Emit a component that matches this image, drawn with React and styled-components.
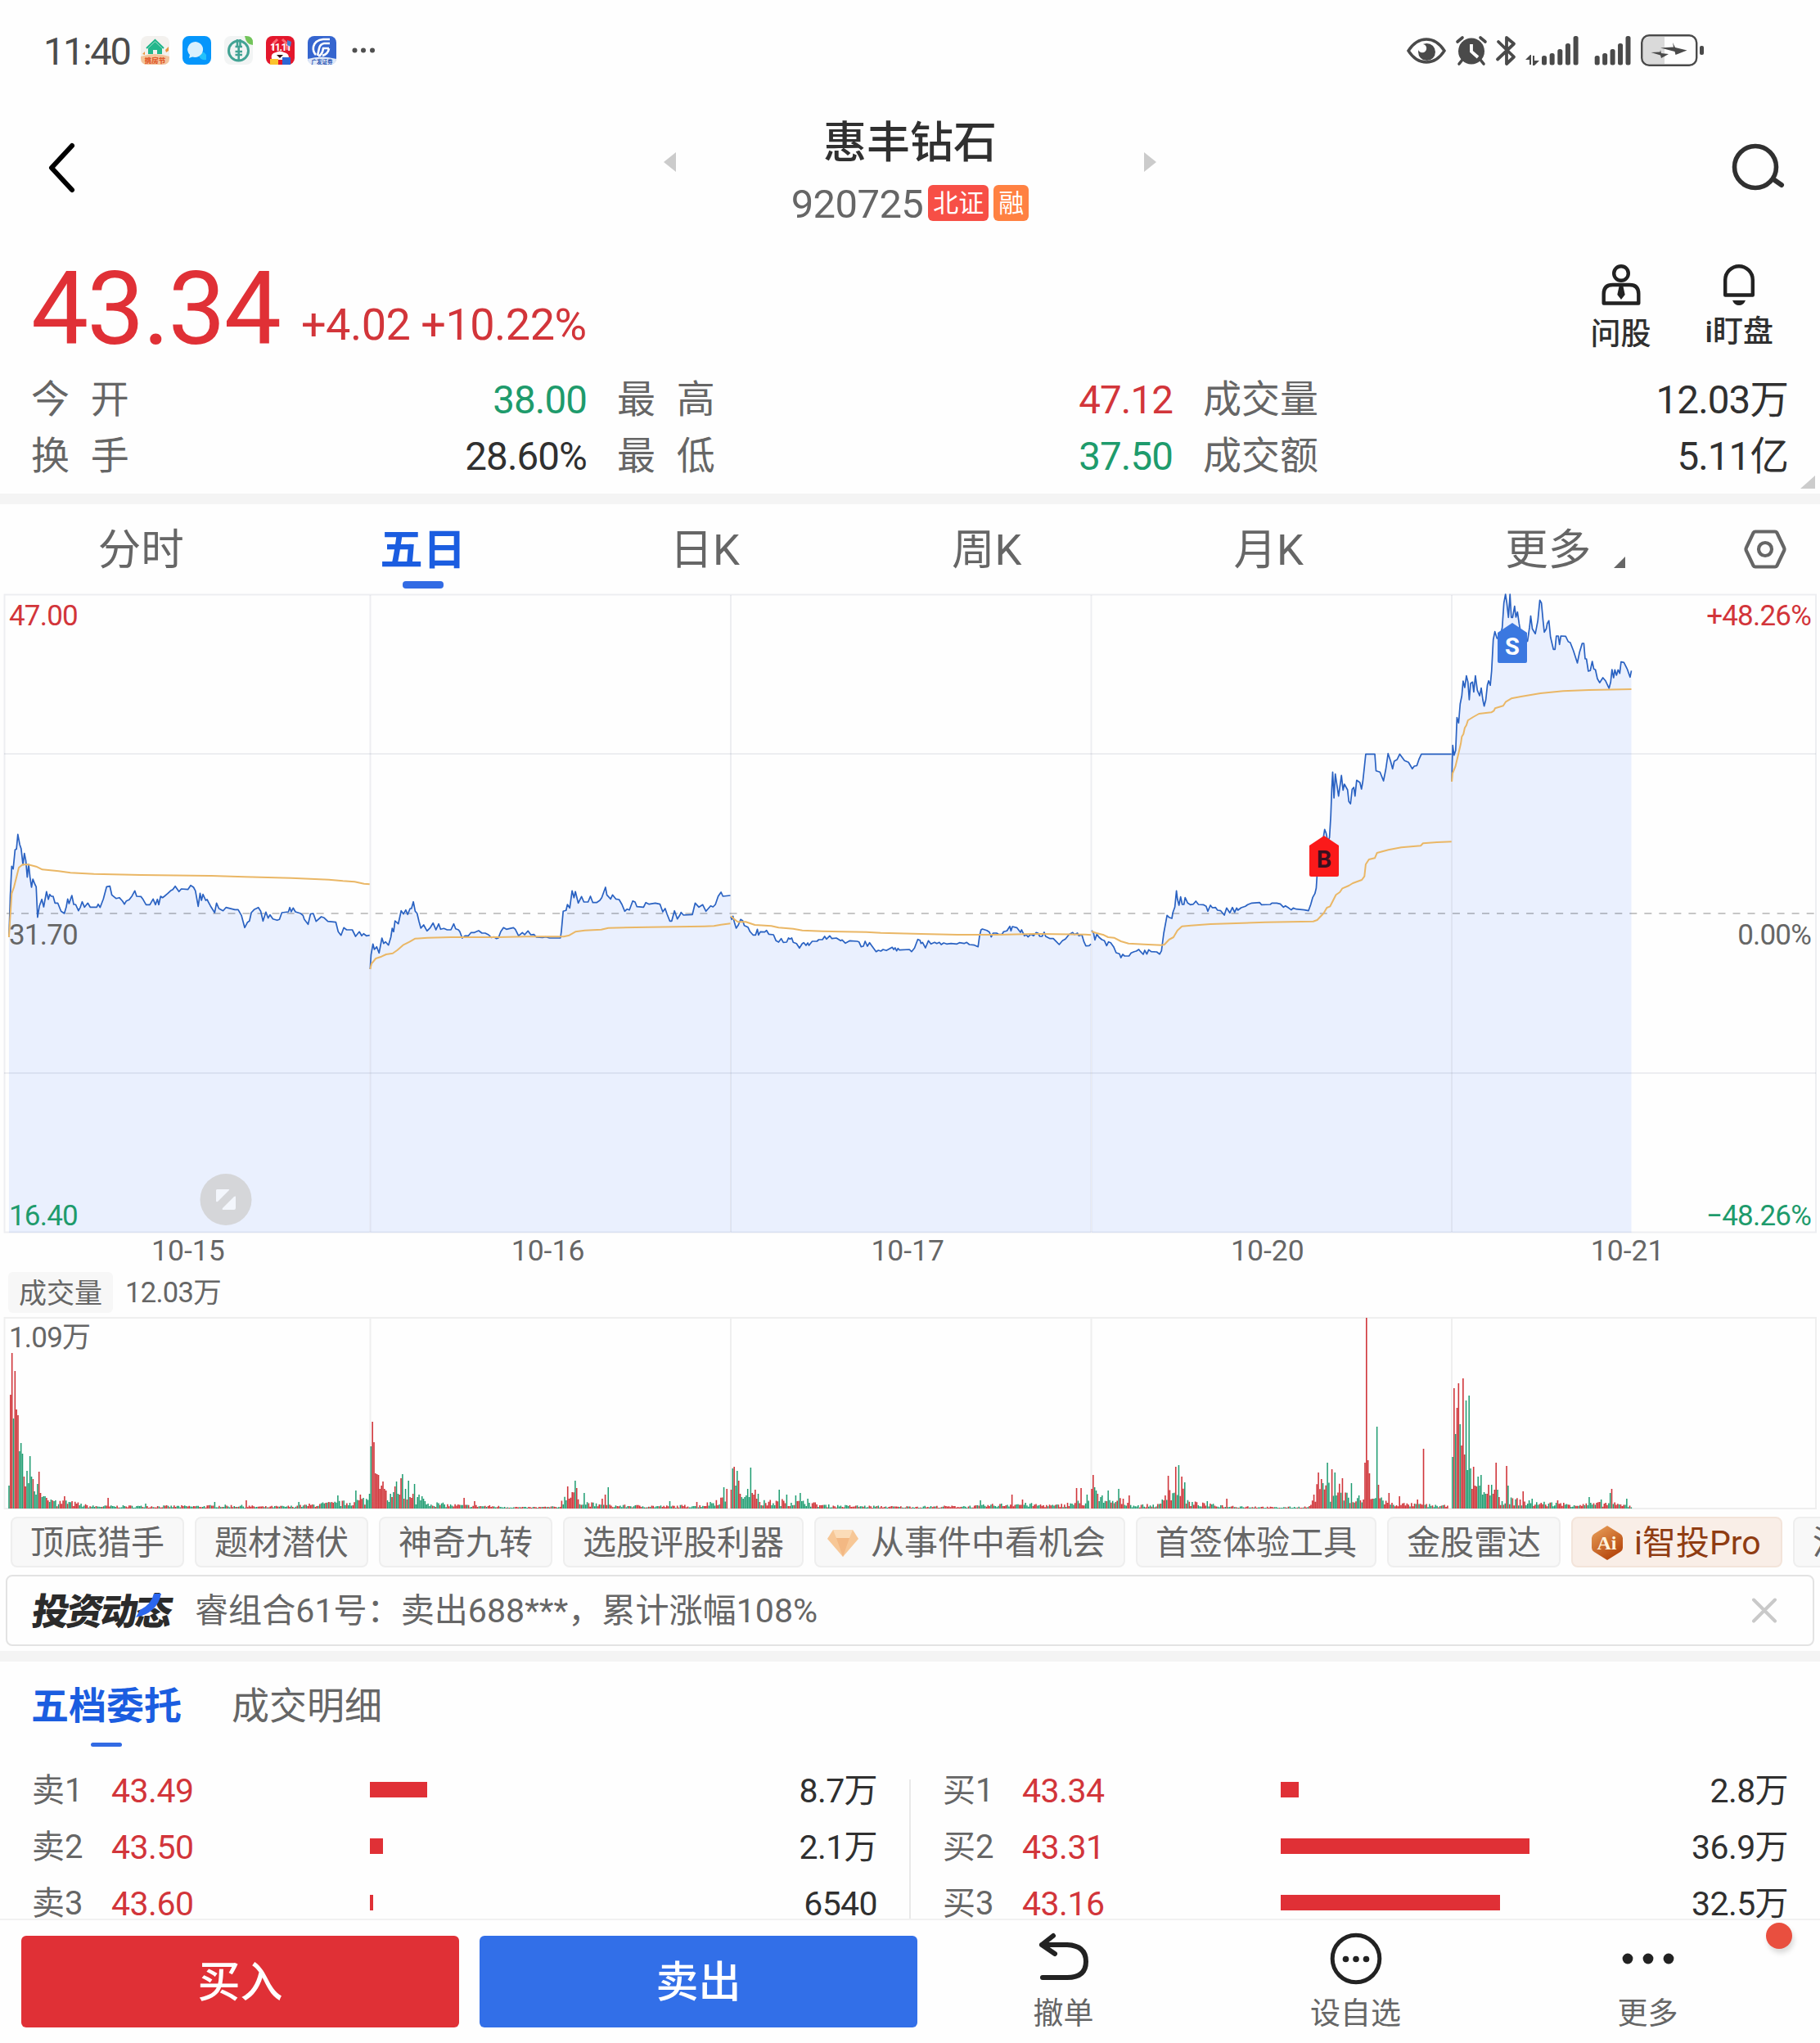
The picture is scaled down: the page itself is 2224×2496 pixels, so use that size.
import React from "react";
import styled, { createGlobalStyle } from "styled-components";

const RED = "#e03036";
const TEXT_RED = "#d2353a";
const GREEN = "#1e9b6c";
const BLUE = "#1b5de0";
const GREY = "#666666";
const DARK = "#303030";

/* ---------- data ---------- */

const stats = [
	{ label: "今 开", value: "38.00", color: GREEN },
	{ label: "最 高", value: "47.12", color: TEXT_RED },
	{ label: "成交量", value: "12.03万", color: DARK },
	{ label: "换 手", value: "28.60%", color: DARK },
	{ label: "最 低", value: "37.50", color: GREEN },
	{ label: "成交额", value: "5.11亿", color: DARK },
];

const periods = ["分时", "五日", "日K", "周K", "月K"];
const dates = ["10-15", "10-16", "10-17", "10-20", "10-21"];

const asks = [
	{ name: "卖1", price: "43.49", bar: 70, amount: "8.7万" },
	{ name: "卖2", price: "43.50", bar: 16, amount: "2.1万" },
	{ name: "卖3", price: "43.60", bar: 4, amount: "6540" },
];

const bids = [
	{ name: "买1", price: "43.34", bar: 22, amount: "2.8万" },
	{ name: "买2", price: "43.31", bar: 304, amount: "36.9万" },
	{ name: "买3", price: "43.16", bar: 268, amount: "32.5万" },
];

// scales of the recorded series: [x factor, x offset, y offset]
const A = [1.7422, 0, 980];
const B = [2.24, 880, 980];
const C = [2.529, 1400, 700];

const priceDays = [
	[[A, "19,495 22,340 25,235 28,245 32,175 35,172 38,118 42,155 45,170 49,230 52,188 55,215 58,275 61,228 64,275 67,312 70,282 74,300 77,310 80,422 84,380 89,356 93,384 99,328 103,356 106,338 109,345 113,345 117,370 123,370 130,400 137,408 141,385 144,355 147,372 153,342 157,375 161,375 167,398 171,385 175,365 180,385 187,370 192,385 206,385 209,374 213,386 220,355 227,310 234,308 238,340 247,353 254,350 261,363 265,374 269,362 275,358 281,344 287,325 291,345 300,346 305,358 311,376 319,376 326,355 331,376 335,356 338,376 342,345 346,350 350,345 357,335 363,325 368,320 373,308 381,328 386,318 400,320 406,305 412,312 416,325 422,382 426,334 429,360 432,338 438,360 441,357 448,380 457,405 461,370 466,390 475,398 481,386 500,394 507,394 514,415 521,460 527,440 531,436 535,405 541,394 550,386 555,400 560,436 566,403 571,425 575,413 581,428 590,433 595,430 600,405 614,402 617,386 620,402 624,388 629,402 640,408 645,415 648,430 656,448 661,410 667,408 673,437 684,420 690,424 698,437 715,440 720,475 726,488 732,460 738,468 750,468 757,492 765,475 770,490 774,482 780,490 787,488"]],
	[[A, "788,612 790,560 794,520 797,540 802,530 807,553 813,498 817,518 821,512 827,524 832,495 835,462 838,475 841,435 848,446 854,398 859,410 864,395 868,412 873,390 876,390 880,365 884,400 888,408 892,437 896,462 902,450 909,472 916,460 922,443 928,468 934,446 938,466 945,463 952,468 960,468 966,446 970,464 976,468 979,475 984,498 990,490 997,490 1003,478 1010,478 1019,471 1026,480 1033,480 1040,486 1046,496 1052,494 1057,500 1061,498 1066,475 1072,460 1078,466 1093,460 1097,466 1104,490 1112,478 1117,486 1124,472 1130,486 1137,485 1142,495 1155,496 1162,494 1170,498 1193,498 1195,475 1199,400 1205,397 1208,375 1213,388 1218,325 1222,350 1225,328 1231,370 1238,346 1243,366 1252,366 1257,345 1262,368 1270,368 1277,360 1281,350 1289,312 1292,340 1300,355 1304,340 1311,355 1318,357 1324,375 1330,400 1335,392 1340,395 1347,362 1352,366 1356,383 1370,385 1375,368 1382,374 1395,370 1405,374 1411,402 1416,390 1420,410 1426,436 1430,436 1436,398 1442,428 1447,415 1450,404 1455,414 1474,412 1480,370 1488,385 1496,376 1503,400 1513,380 1518,384 1523,375 1529,345 1535,330 1539,345 1555,342"]],
	[[B, "29,420 32,430 35,418 39,440 44,462 50,450 56,430 62,435 66,452 76,458 82,475 90,487 97,487 102,466 105,487 110,475 122,476 127,470 133,484 146,486 153,508 160,513 167,500 173,514 182,513 187,498 191,502 196,498 200,514 209,518 217,535 225,518 229,515 235,525 240,516 243,525 252,510 265,510 270,504 280,504 286,492 291,502 300,490 306,500 318,498 330,508 334,505 343,517 355,508 375,510 380,512 386,530 392,528 397,510 403,528 409,515 417,530 427,548 433,543 440,546 446,540 455,544 471,532 475,540 479,534 483,545 487,536 491,542 518,540 524,548 532,535 541,503 547,506 550,518 554,514 562,534 570,508 577,520 587,514 593,518 600,514 605,522 612,516 620,520 632,518 648,520 655,515 668,518 675,514 682,522 696,524 706,530 710,490 714,468 718,465 730,470 737,476 742,494 747,480 757,480 763,485 772,484 776,475 785,472 793,455 796,472 800,456 812,460 819,472 822,477 825,468 833,490 838,486 843,494 850,484 858,490 865,478 870,480 875,492 881,492 887,477 891,492 903,500 912,500 918,508 928,522 937,508 945,502 955,485 965,478 970,485 978,480 982,490 990,486 996,512 1001,527 1010,526 1015,520"]],
	[
		[B, "1017,470 1022,480 1026,505 1031,484 1037,495 1045,504 1052,508 1058,526 1063,512 1069,515 1077,530 1084,552 1093,556 1097,570 1102,558 1107,564 1119,564 1125,553 1133,548 1139,546 1146,540 1151,548 1158,558 1162,543 1168,557 1173,541 1180,548 1195,549 1203,557 1208,545"],
		[C, "56,1320 66,1255 72,1262 81,1266 84,1245 90,1225 95,1165 98,1195 103,1218 108,1187 113,1215 118,1215 122,1190 130,1210 138,1216 147,1214 155,1203 163,1215 178,1216 187,1222 192,1240 200,1218 206,1227 216,1226 222,1236 232,1238 243,1254 250,1228 260,1246 268,1226 275,1244 281,1228 285,1236 295,1227 308,1222 315,1216 328,1210 352,1208 358,1216 385,1215 390,1210 405,1210 416,1213 426,1225 432,1220 442,1228 450,1235 456,1228 465,1232 490,1235 503,1238 510,1215 516,1190 523,1175 527,1155 530,1100 540,1040 553,940 558,955 563,985 568,970 572,890 575,790 578,730 582,825 586,737 596,818 605,742 610,796 614,774 624,795 628,838 633,846 638,793 643,786 647,818 652,760 662,768 667,792 671,765 676,710 680,664 708,664 712,725 724,730 735,762 742,720 749,662 757,690 763,718 768,690 777,684 785,664 790,672 800,688 812,694 824,718 830,708 838,706 845,682 852,664 945,664"],
	],
	[[C, "946,765 947,700 949,632 953,668 958,650 962,530 967,550 972,480 977,450 981,396 986,420 991,377 996,400 1000,465 1004,405 1010,400 1014,436 1019,377 1025,430 1032,450 1037,422 1042,465 1046,488 1051,465 1056,410 1060,395 1065,412 1069,360 1074,245 1079,215 1086,240 1095,235 1102,200 1107,110 1112,78 1116,110 1121,163 1126,78 1130,163 1134,163 1140,122 1144,162 1149,143 1154,185 1165,260 1180,250 1186,200 1190,158 1195,205 1204,223 1212,175 1218,100 1223,110 1228,175 1232,217 1238,205 1241,185 1246,175 1251,235 1260,280 1265,280 1269,231 1275,231 1279,262 1283,231 1298,232 1306,252 1312,255 1322,285 1334,330 1341,290 1349,258 1354,258 1358,315 1362,315 1368,360 1374,358 1380,324 1385,352 1390,355 1396,388 1403,402 1413,384 1421,395 1432,423 1437,400 1441,354 1446,384 1450,355 1455,375 1460,355 1465,368 1469,326 1478,328 1488,352 1497,382 1501,358"]],
];

const averageDays = [
	[[A, "19,495 25,335 30,310 35,275 40,240 48,229 60,229 77,236 90,247 125,253 150,259 200,263 300,267 450,270 520,274 620,278 700,284 730,289 755,292 775,299 787,301"]],
	[[A, "788,612 791,592 800,573 812,566 822,558 836,554 846,542 858,524 872,512 884,500 910,497 960,495 1060,495 1120,493 1200,493 1212,488 1225,475 1245,470 1280,467 1295,461 1380,458 1500,455 1520,454 1535,449 1555,445"]],
	[[B, "29,418 38,428 48,439 70,439 95,450 140,454 160,460 200,464 225,470 280,473 400,476 440,479 550,483 650,486 760,486 860,483 1000,485 1015,487"]],
	[
		[B, "1017,474 1030,480 1050,487 1062,495 1078,497 1097,510 1118,518 1160,521 1208,524"],
		[C, "58,1362 72,1344 86,1335 98,1310 112,1295 140,1292 200,1287 370,1280 518,1277 530,1272 550,1247 560,1227 570,1222 588,1180 600,1170 608,1156 628,1146 640,1137 668,1125 676,1112 680,1068 690,1050 708,1045 715,1026 750,1015 790,1006 850,1000 857,991 900,987 945,985"],
	],
	[[C, "946,765 948,735 957,710 963,680 967,660 974,625 977,600 982,590 986,568 991,558 996,540 1012,528 1030,516 1068,511 1076,505 1080,496 1105,487 1113,472 1130,460 1160,453 1220,441 1290,433 1370,429 1501,426"]],
];

// opening bars one by one, then an envelope for the quiet part and single peaks
const volumeDays = [
	{
		x: 11, count: 240,
		open: "g28 r139 r190 g110 r168 r121 r114 g70 g80 g67 r39 r27 g46 g31 g64 g39 r36 g21 g17 g30 r45 r19 g14 g15 g15 r13 r10 g8 g11 r10 g9 g10",
		env: [[60, 10], [78, 12], [95, 8], [110, 4], [240, 4], [290, 5], [320, 3], [360, 4], [395, 8], [420, 10], [447, 16]],
		peaks: [[78, 15, "r"], [132, 13, "r"], [178, 6, "g"], [263, 8, "g"], [301, 10, "r"], [366, 8, "g"], [413, 16, "g"], [435, 22, "g"], [440, 17, "r"]],
	},
	{
		x: 451.5, count: 239,
		open: "g18 g76 r106 r81 r43 r42 r41 r24 r28 r33 r24 r22 g10 g8 g18 r14 g20 r27 g33 g18 r17 r37 g42 r12 g24 r11 g34 r14 r13 r18 g30 g5 g14 g17 g10 g15 g12 g9 g5",
		env: [[522, 10], [550, 6], [600, 4], [640, 2], [683, 3], [690, 20], [705, 22], [716, 10], [730, 6], [745, 5], [820, 4], [860, 6], [875, 14], [892, 22]],
		peaks: [[567, 13, "r"], [580, 9, "r"], [694, 27, "r"], [699, 20, "r"], [702, 34, "g"], [705, 25, "r"], [714, 19, "g"], [736, 12, "r"], [740, 17, "r"], [743, 26, "g"], [818, 9, "g"], [851, 8, "r"], [884, 26, "g"], [888, 24, "r"]],
	},
	{
		x: 893.5, count: 239,
		open: "r23 g49 r51 g28 g46 r34 r18 g14 g12 g14 g16 g24 g14 g50 r19 r17 r23 r12 g18 r8",
		env: [[925, 10], [960, 12], [985, 10], [1010, 5], [1100, 3], [1190, 4], [1240, 8], [1290, 5], [1315, 10], [1330, 12]],
		peaks: [[952, 23, "g"], [962, 17, "g"], [972, 16, "g"], [978, 19, "g"], [987, 12, "g"], [1198, 10, "g"], [1236, 17, "r"], [1250, 11, "r"], [1316, 25, "r"], [1321, 25, "r"], [1328, 17, "g"]],
	},
	{
		x: 1334, count: 238,
		open: "r24 r41 g26 g22 r18 g9 g14 g16 g7",
		env: [[1350, 10], [1370, 14], [1385, 5], [1418, 6], [1425, 30], [1446, 34], [1452, 10], [1480, 6], [1510, 4], [1560, 2], [1600, 3], [1608, 30], [1640, 36], [1650, 14], [1665, 14], [1685, 18], [1700, 8], [1740, 6], [1772, 4]],
		peaks: [[1354, 22, "g"], [1367, 24, "g"], [1380, 16, "r"], [1427, 40, "r"], [1437, 51, "r"], [1441, 53, "g"], [1444, 39, "r"], [1447, 32, "g"], [1475, 9, "g"], [1499, 12, "r"], [1611, 44, "r"], [1614, 36, "r"], [1622, 56, "g"], [1628, 48, "r"], [1632, 44, "g"], [1640, 37, "r"], [1652, 31, "g"], [1661, 16, "g"], [1668, 56, "r"], [1670, 233, "r"], [1672, 59, "r"], [1674, 43, "r"], [1683, 100, "g"], [1685, 29, "r"], [1698, 19, "r"], [1711, 15, "r"], [1732, 11, "r"], [1739.6, 73, "r"]],
	},
	{
		x: 1775, count: 120,
		open: "g63 r147 g91 r123 r153 g103 r77 r159 r66 g132 g47 g138 g49 r24 r51 r28 r27 g39 g28 g41 g17 g20 g18 r18 r29 g16 g29 r18 r23 r56 g23",
		env: [[1832, 14], [1838, 18], [1850, 14], [1870, 10], [1900, 8], [1940, 7], [1965, 9], [1995, 4]],
		peaks: [[1841, 52, "r"], [1843, 28, "g"], [1861, 21, "r"], [1873, 12, "g"], [1903, 10, "r"], [1942, 14, "g"], [1957, 11, "g"], [1968, 19, "g"], [1970, 24, "r"], [1988, 12, "g"]],
	},
];

/* ---------- chart helpers ---------- */

const toPoints = (segments) =>
	segments.flatMap(([[kx, ox, oy], pts]) =>
		pts.split(" ").map((p) => {
			const [x, y] = p.split(",").map(Number);
			return [+(x / kx + ox).toFixed(1), +(y / 3 + oy).toFixed(1)];
		})
	);

const linePath = (points) => "M" + points.map((p) => p.join(" ")).join("L");

const areaPath = (points) =>
	`${linePath(points)}L${points[points.length - 1][0]} 1506L${points[0][0]} 1506Z`;

const envelopeAt = (env, x) => {
	for (let i = 1; i < env.length; i++) {
		if (x <= env[i][0]) {
			const [x0, h0] = env[i - 1];
			const [x1, h1] = env[i];
			return h0 + ((h1 - h0) * Math.max(0, x - x0)) / (x1 - x0);
		}
	}
	return env[env.length - 1][1];
};

const STEP = 1.835;

const buildBars = () => {
	let seed = 7;
	const rand = () => {
		seed = (seed * 16807) % 2147483647;
		return seed / 2147483647;
	};
	const paths = { r: "", g: "" };
	volumeDays.forEach((day) => {
		const open = day.open.split(" ");
		const bars = [];
		for (let i = 0; i < day.count; i++) {
			const x = day.x + i * STEP;
			if (i < open.length) {
				bars.push([open[i][0], Number(open[i].slice(1))]);
			} else {
				const h = envelopeAt(day.env, x) * (0.25 + 0.75 * rand());
				bars.push([rand() > 0.5 ? "r" : "g", Math.max(1, h)]);
			}
		}
		day.peaks.forEach(([x, h, c]) => {
			const i = Math.round((x - day.x) / STEP);
			if (bars[i]) bars[i] = [c, h];
		});
		bars.forEach(([c, h], i) => {
			paths[c] += `M${(day.x + i * STEP).toFixed(2)} 1843v${-h.toFixed(1)}`;
		});
	});
	return paths;
};

const bars = buildBars();
const DAY_LINES = [452.5, 893, 1333.5, 1774];

/* ---------- icons ---------- */

const AppIcons = () => (
	<svg width="290" height="40" viewBox="170 42 290 40">
		<rect x="172" y="44" width="35" height="35" rx="8" fill="#f3f1ee" />
		<path d="M172 69q17-6 35 0v2q0 8-8 8h-19q-8 0-8-8z" fill="#f3c49c" />
		<path d="M179 59l10.500-10 10.500 10" fill="none" stroke="#1db58a" strokeWidth="2" />
		<path d="M181 59l8.500-8 8.500 8v7h-6v-5h-5v5h-6z" fill="#22b78c" />
		<path d="M202 61l4-4v5l-3 2zM174 66l3-3v4z" fill="#e9963f" />
		<text x="189.500" y="76.500" fontSize="8.500" fontWeight="900" fill="#e0592a" textAnchor="middle">挑房节</text>

		<rect x="223" y="44" width="35" height="35" rx="8" fill="#0596fb" />
		<path d="M243 67q5-7 9 0l0 6q-8 1-9-6z" fill="#22c1fb" />
		<path d="M239 51a10 9.500 0 1 1-4 18.500l-4 1.500 1-4a10 9.500 0 0 1 7-16z" fill="#d9f0fd" />

		<rect x="274" y="44" width="35" height="35" rx="8" fill="#f2f4f4" />
		<circle cx="291.500" cy="62" r="12" fill="none" stroke="#42a394" strokeWidth="3" />
		<path d="M290 48v9M293.500 48v9M287.500 57h8.500M291.700 57v17M287.500 63h8.500M287.500 67h8.500" fill="none" stroke="#42a394" strokeWidth="2.600" />
		<path d="M299 44h2q8 0 8 8v3q-8 0-10-11z" fill="#72c45a" />

		<rect x="325" y="44" width="35" height="35" rx="8" fill="#e3172c" />
		<path d="M333 61l1-8 5-5M351 61l-1-8-5-5" fill="none" stroke="#fa6c74" strokeWidth="3" />
		<text x="342.500" y="61.500" fontSize="12.500" fontWeight="700" fill="#fff" textAnchor="middle" letterSpacing="-1.500">11.11</text>
		<path d="M332 73q-2-8 5-9 5-3 10 0 7 1 6 9z" fill="#fff" />
		<path d="M338 67h8l-4 4z" fill="#3a1416" />
		<path d="M330 72h10v7h-10z" fill="#fbc32c" />
		<path d="M345 70h10v9h-10z" fill="#2d66d4" />
		<path d="M351 49l5 2-1 6-4-2z" fill="#417fd0" />

		<rect x="376" y="44" width="35" height="35" rx="8" fill="#3565cf" />
		<path d="M376 72q17-5 35 0 0 7-8 7h-19q-8 0-8-7z" fill="#dfe8f8" />
		<path d="M403 48h-8q-10 1-12 9-1 6 3 10M403 53h-7q-5 1-6 6l-2 9M402 59h-7q-1 8-6 9.500M402 59q-1 7-8 9" fill="none" stroke="#fff" strokeWidth="2.600" />
		<text x="393.500" y="77.500" fontSize="6.500" fontWeight="700" fill="#2f58b4" textAnchor="middle">广发证券</text>

		<g fill="#505050">
			<circle cx="433.500" cy="61.500" r="3" />
			<circle cx="444" cy="61.500" r="3" />
			<circle cx="455" cy="61.500" r="3" />
		</g>
	</svg>
);

const SIGNAL_TOPS = [68, 65, 60, 53, 44];

const SystemIcons = () => (
	<svg width="368" height="44" viewBox="1716 40 368 44">
		<g fill="none" stroke="#4a4a4a" strokeWidth="3.400">
			<path d="M1721 62q9-14 22-14t22 14q-9 14-22 14t-22-14z" />
		</g>
		<circle cx="1743.500" cy="63.500" r="10.500" fill="#4a4a4a" />
		<circle cx="1738" cy="59" r="5.200" fill="#fff" />
		<circle cx="1798" cy="62.500" r="16" fill="#4a4a4a" />
		<path d="M1781 51l6-5M1815 51l-6-5M1787 73l-4 5M1809 73l4 5" stroke="#4a4a4a" strokeWidth="3.600" strokeLinecap="round" />
		<path d="M1798 54v9l8 7" fill="none" stroke="#fff" strokeWidth="3.800" />
		<path d="M1831 51l19 18.500-9 8.500v-32l9 7.500-20 19" fill="none" stroke="#4a4a4a" strokeWidth="3.800" strokeLinecap="round" strokeLinejoin="round" />
		<path d="M1864 73l6-6h1v12h-2v-6zM1873 68h2v6h6l-6 6h-2z" fill="#4a4a4a" />
		{SIGNAL_TOPS.map((top, i) => (
			<g key={top} fill="#4a4a4a">
				<rect x={1884 + i * 9.65} y={top} width="6" height={79.5 - top} rx="2.500" />
				<rect x={1948.7 + i * 9.45} y={top} width="6" height={79.5 - top} rx="2.500" />
			</g>
		))}
		<path d="M2016 45h18v33h-18q-9 0-9-9v-15q0-9 9-9z" fill="#dadada" />
		<rect x="2006.200" y="43.200" width="67" height="36.500" rx="9" fill="none" stroke="#4a4a4a" strokeWidth="2.400" />
		<rect x="2077" y="56" width="5" height="11" rx="2" fill="#4a4a4a" />
		<path d="M2044 52l3 6 14.500 3.500-14 5.500-1-4-17.500-4.500 16-1zM2029 61l1 4 9 1-9 5-1-3.500-11.500-3.500 11-.500z" fill="#4a4a4a" />
	</svg>
);

const BackIcon = () => (
	<svg width="36" height="64" viewBox="0 0 36 64">
		<path d="M31 5L6 32l25 27" fill="none" stroke="#000" strokeWidth="6" strokeLinecap="round" strokeLinejoin="round" />
	</svg>
);

const SearchIcon = () => (
	<svg width="68" height="60" viewBox="0 0 68 60">
		<circle cx="31" cy="29" r="25.500" fill="none" stroke="#303030" strokeWidth="5.600" />
		<path d="M53 44l10 7" stroke="#303030" strokeWidth="6" strokeLinecap="round" />
	</svg>
);

const AdvisorIcon = () => (
	<svg width="48" height="52" viewBox="0 0 48 52">
		<g fill="none" stroke="#222" strokeWidth="4.400" strokeLinejoin="round">
			<circle cx="24" cy="12" r="8.800" />
			<path d="M2.700 48.500V37q0-11 11-11h20.600q11 0 11 11v11.500z" />
		</g>
		<path d="M21.500 28h5l2.200 10-4.700 6-4.700-6z" fill="#222" />
	</svg>
);

const BellIcon = () => (
	<svg width="40" height="52" viewBox="0 0 40 52">
		<path d="M3.200 38.500V20a16.800 16.800 0 0 1 33.600 0v18.500z" fill="none" stroke="#222" strokeWidth="4.400" strokeLinejoin="round" />
		<path d="M12 45h16q-2.500 6-8 6t-8-6z" fill="#222" />
	</svg>
);

const SettingIcon = () => (
	<svg width="52" height="48" viewBox="0 0 52 48">
		<path d="M14 2.500h24q1.500 0 2.500 1.500l8.500 18q1 2 0 4l-8.500 18q-1 1.500-2.500 1.500h-24q-1.500 0-2.500-1.500L3 26q-1-2 0-4l8.500-18q1-1.500 2.500-1.500z" fill="none" stroke="#666" strokeWidth="4.200" />
		<circle cx="26" cy="24" r="8" fill="none" stroke="#666" strokeWidth="4.200" />
	</svg>
);

const DiamondIcon = () => (
	<svg width="38" height="34" viewBox="0 0 38 34">
		<path d="M7 1h24l7 11-19 22L0 12z" fill="#f7c796" />
		<path d="M7 1h24l-4 10H11z" fill="#fbdcb8" />
		<path d="M11 11h16l-8 23z" fill="#f3b883" />
	</svg>
);

const AiIcon = () => (
	<svg width="38" height="42" viewBox="0 0 38 42">
		<defs>
			<linearGradient id="ai" x1="0" y1="0" x2="0.600" y2="1">
				<stop offset="0" stopColor="#eba35c" />
				<stop offset="1" stopColor="#b5460c" />
			</linearGradient>
		</defs>
		<path d="M19 0l16 10q3 2 3 5v12q0 3-3 5L19 42 3 32q-3-2-3-5V15q0-3 3-5z" fill="url(#ai)" />
		<text x="18.500" y="28.500" fontSize="24" fontWeight="700" fontFamily="Liberation Serif, serif" fill="#fff4dc" textAnchor="middle">Ai</text>
	</svg>
);

const CloseIcon = () => (
	<svg width="32" height="32" viewBox="0 0 32 32">
		<path d="M3 2.500l26 26M29 2.500L3 28.500" stroke="#c9c9c9" strokeWidth="4" strokeLinecap="round" />
	</svg>
);

const UndoIcon = () => (
	<svg width="64" height="60" viewBox="0 0 64 60">
		<path d="M5 15h31q23 1 23 20.500T36 55H6M19 4L5 15l16 11" fill="none" stroke="#222" strokeWidth="6" strokeLinecap="round" strokeLinejoin="round" />
	</svg>
);

const WatchIcon = () => (
	<svg width="64" height="64" viewBox="0 0 64 64">
		<circle cx="32" cy="32" r="28.800" fill="none" stroke="#222" strokeWidth="5" />
		<g fill="#222">
			<circle cx="19.500" cy="32.500" r="3.800" />
			<circle cx="32" cy="32.500" r="3.800" />
			<circle cx="44.500" cy="32.500" r="3.800" />
		</g>
	</svg>
);

const MoreIcon = () => (
	<svg width="64" height="64" viewBox="0 0 64 64">
		<g fill="#222">
			<circle cx="7" cy="32" r="6.400" />
			<circle cx="32" cy="32" r="6.400" />
			<circle cx="57" cy="32" r="6.400" />
		</g>
	</svg>
);

const NewsLogo = () => (
	<svg width="180" height="68" viewBox="0 -8 180 68">
		<g transform="translate(6 0) skewX(-9)">
			<text x="0" y="43" fontSize="45" fontWeight="900" fill="#2b2b2b" textLength="171">投资动态</text>
		</g>
		<path d="M159 5h-9q-3 13-17 20l-5 9q26-5 31-29z" fill="#2b66ee" />
	</svg>
);

/* ---------- charts ---------- */

const PriceChart = () => (
	<ChartSvg height="782" viewBox="0 725 2224 782">
		{priceDays.map((day, i) => (
			<path key={i} d={areaPath(toPoints(day))} fill="#eaf0fe" />
		))}
		<g stroke="#1e2850" strokeOpacity="0.075" strokeWidth="2" fill="none">
			<path d="M5.500 726.500H2219V1505.500H5.500z" />
			<path d="M5 921H2219M5 1311H2219" />
			{DAY_LINES.map((x) => (
				<path key={x} d={`M${x} 727V1505`} />
			))}
		</g>
		<path d="M8 1116H2219" stroke="#000" strokeOpacity="0.220" strokeWidth="2" strokeDasharray="9 9.030" />
		{priceDays.map((day, i) => (
			<path key={i} d={linePath(toPoints(day))} fill="none" stroke="#2a62c2" strokeWidth="1.700" strokeLinejoin="round" />
		))}
		{averageDays.map((day, i) => (
			<path key={i} d={linePath(toPoints(day))} fill="none" stroke="#eab766" strokeWidth="2" strokeLinejoin="round" />
		))}
		<path d="M1830 773l18-12 18 12v35q0 2-2 2h-32q-2 0-2-2z" fill="#3b78e0" />
		<text x="1848" y="800" fontSize="29" fontWeight="700" fill="#fff" textAnchor="middle">S</text>
		<path d="M1600 1033l18-12 18 12v36q0 2-2 2h-32q-2 0-2-2z" fill="#fb1a1a" />
		<text x="1618" y="1060" fontSize="29" fontWeight="700" fill="#3a1020" textAnchor="middle">B</text>
		<circle cx="276" cy="1465.500" r="31.500" fill="#d5d6d9" />
		<path d="M265 1453h14q2 0 1 1l-14 14q-2 1-2-1v-13zM288 1462v14q0 2-2 2h-13q-2 0-1-2l14-14q2-1 2 0z" fill="#f3f6fc" />
		<AxisText x="11" y="764" $color={TEXT_RED}>47.00</AxisText>
		<AxisText x="11" y="1154">31.70</AxisText>
		<AxisText x="11" y="1497" $color={GREEN}>16.40</AxisText>
		<AxisText x="2213" y="764" textAnchor="end" $color={TEXT_RED}>+48.26%</AxisText>
		<AxisText x="2213" y="1154" textAnchor="end">0.00%</AxisText>
		<AxisText x="2213" y="1497" textAnchor="end" $color={GREEN}>−48.26%</AxisText>
	</ChartSvg>
);

const VolumeChart = () => (
	<ChartSvg height="236" viewBox="0 1609 2224 236">
		<g stroke="#efefef" strokeWidth="2" fill="none">
			<path d="M5.500 1610H2219V1843H5.500z" />
			{DAY_LINES.map((x) => (
				<path key={x} d={`M${x} 1610V1843`} />
			))}
		</g>
		<path d={bars.r} stroke="#d0363b" strokeWidth="1.600" />
		<path d={bars.g} stroke="#1d9c70" strokeWidth="1.500" />
		<AxisText x="11" y="1646">1.09万</AxisText>
	</ChartSvg>
);

const OrderSide = ({ rows }) => (
	<Side>
		{rows.map((row) => (
			<OrderRow key={row.name}>
				<OrderName>{row.name}</OrderName>
				<OrderPrice>{row.price}</OrderPrice>
				<DepthBar style={{ width: row.bar }} />
				<OrderAmount>{row.amount}</OrderAmount>
			</OrderRow>
		))}
	</Side>
);

const App = () => {
	return (
		<Screen>
			<GlobalStyle />
			<StatusBar>
				<Clock>11:40</Clock>
				<AppIcons />
				<StatusRight>
					<SystemIcons />
				</StatusRight>
			</StatusBar>

			<Header>
				<BackIcon />
				<TitleArea>
					<Arrow $left />
					<Title>
						<StockName>惠丰钻石</StockName>
						<CodeRow>
							<Code>920725</Code>
							<Badge $color="#f74f46">北证</Badge>
							<Badge $color="#ff8142">融</Badge>
						</CodeRow>
					</Title>
					<Arrow />
				</TitleArea>
				<SearchIcon />
			</Header>

			<PriceRow>
				<Price>43.34</Price>
				<Change>+4.02 +10.22%</Change>
				<Actions>
					<Action>
						<AdvisorIcon />
						<span>问股</span>
					</Action>
					<Action $lift>
						<BellIcon />
						<span>i盯盘</span>
					</Action>
				</Actions>
			</PriceRow>

			<Stats>
				{stats.map((s) => (
					<Stat key={s.label}>
						<StatLabel>{s.label}</StatLabel>
						<StatValue $color={s.color}>{s.value}</StatValue>
					</Stat>
				))}
				<Corner />
			</Stats>

			<Band />

			<Periods>
				{periods.map((p) => (
					<Period key={p} $active={p === "五日"}>
						{p}
					</Period>
				))}
				<Period>
					更多
					<SmallCorner />
				</Period>
				<SettingIcon />
			</Periods>

			<PriceChart />
			<Dates>
				{dates.map((d) => (
					<span key={d}>{d}</span>
				))}
			</Dates>

			<VolumeHead>
				<VolumeTag>成交量</VolumeTag>
				<span>12.03万</span>
			</VolumeHead>
			<VolumeChart />

			<Chips>
				<Chip>顶底猎手</Chip>
				<Chip>题材潜伏</Chip>
				<Chip>神奇九转</Chip>
				<Chip>选股评股利器</Chip>
				<Chip $icon>
					<DiamondIcon />
					从事件中看机会
				</Chip>
				<Chip>首签体验工具</Chip>
				<Chip>金股雷达</Chip>
				<Chip $pro>
					<AiIcon />
					i智投Pro
				</Chip>
				<Chip>活跃资金</Chip>
			</Chips>

			<News>
				<NewsLogo />
				<NewsText>睿组合61号：卖出688***，累计涨幅108%</NewsText>
				<CloseIcon />
			</News>

			<Band />

			<BookTabs>
				<BookTab $active>五档委托</BookTab>
				<BookTab>成交明细</BookTab>
			</BookTabs>

			<Book>
				<OrderSide rows={asks} />
				<Divider />
				<OrderSide rows={bids} />
			</Book>

			<BottomBar>
				<TradeButton $color={RED}>买入</TradeButton>
				<TradeButton $color="#326fe8">卖出</TradeButton>
				<Tool>
					<UndoIcon />
					<span>撤单</span>
				</Tool>
				<Tool>
					<WatchIcon />
					<span>设自选</span>
				</Tool>
				<Tool>
					<MoreIcon />
					<span>更多</span>
				</Tool>
				<RedDot />
			</BottomBar>
		</Screen>
	);
};

export default App;

/* ---------- styles ---------- */

const GlobalStyle = createGlobalStyle`
	* {
		box-sizing: border-box;
	}
	body {
		margin: 0;
		background: #fefefe;
		font-family: Roboto, "Noto Sans CJK SC", sans-serif;
	}
	svg {
		display: block;
		flex-shrink: 0;
	}
`;

const Screen = styled.div`
	display: flex;
	flex-direction: column;
	width: 2224px;
	height: 2496px;
	overflow: hidden;
	background: #fefefe;
	color: ${GREY};
	white-space: nowrap;

	> * {
		flex-shrink: 0;
	}
`;

const StatusBar = styled.div`
	display: flex;
	align-items: center;
	height: 124px;
	padding: 0 140px 0 53px;
`;

const Clock = styled.span`
	width: 117px;
	padding-top: 2px;
	font-size: 47px;
	line-height: 50px;
	letter-spacing: -2.3px;
	color: #4c4c4c;
`;

const StatusRight = styled.div`
	margin-left: auto;
`;

const Header = styled.div`
	display: flex;
	align-items: center;
	justify-content: space-between;
	height: 162px;
	padding: 0 42px 0 57px;
`;

const TitleArea = styled.div`
	display: flex;
	align-items: center;
	justify-content: space-between;
	width: 602px;
	height: 162px;
	margin-left: 17px;
`;

const Arrow = styled.i`
	border: 12px solid transparent;
	border-width: 12px ${({ $left }) => ($left ? "15px 12px 0" : "0 12px 15px")};
	border-${({ $left }) => ($left ? "right" : "left")}-color: #cbcbcb;
	margin-bottom: 14px;
`;

const Title = styled.div`
	display: flex;
	flex-direction: column;
	align-items: center;
	padding-top: 10px;
`;

const StockName = styled.div`
	font-size: 53px;
	line-height: 76px;
	font-weight: 500;
	color: #303030;
`;

const CodeRow = styled.div`
	display: flex;
	align-items: center;
	gap: 6px;
	height: 70px;
`;

const Code = styled.span`
	padding-top: 3px;
	font-size: 49px;
	letter-spacing: -0.6px;
	line-height: 68px;
`;

const Badge = styled.span`
	height: 44px;
	padding: 0 6px;
	border-radius: 6px;
	background: ${({ $color }) => $color};
	color: #fff;
	font-size: 31px;
	line-height: 46px;
`;

const PriceRow = styled.div`
	display: flex;
	align-items: flex-start;
	height: 166px;
	padding: 17px 57px 0 38px;
`;

const Price = styled.span`
	font-size: 125px;
	line-height: 150px;
	letter-spacing: -2px;
	color: ${RED};
`;

const Change = styled.span`
	margin: 64px 0 0 26px;
	font-size: 54px;
	line-height: 60px;
	letter-spacing: -0.5px;
	color: ${TEXT_RED};
`;

const Actions = styled.div`
	display: flex;
	gap: 66px;
	margin: 19px 0 0 auto;
`;

const Action = styled.div`
	display: flex;
	flex-direction: column;
	align-items: center;
	gap: ${({ $lift }) => ($lift ? "9px" : "12px")};
	font-size: 37px;
	line-height: 46px;
	font-weight: 500;
	color: ${DARK};
`;

const Stats = styled.div`
	position: relative;
	display: grid;
	grid-template-columns: 679px 679px 715px;
	column-gap: 37px;
	grid-auto-rows: 69px;
	height: 151px;
	padding: 1px 0 0 38px;
`;

const Stat = styled.div`
	display: flex;
	justify-content: space-between;
	line-height: 69px;
`;

const StatLabel = styled.span`
	font-size: 47px;
	word-spacing: 14px;
`;

const StatValue = styled.span`
	padding-top: 2px;
	font-size: 47.5px;
	letter-spacing: -0.9px;
	color: ${({ $color }) => $color};
`;

const Corner = styled.i`
	position: absolute;
	right: 6px;
	bottom: 6px;
	border: 8px solid #cccccc;
	border-width: 8px 9px;
	border-top-color: transparent;
	border-left-color: transparent;
`;

const Band = styled.div`
	height: 13px;
	background: #f4f4f4;
`;

const Periods = styled.div`
	display: flex;
	align-items: center;
	height: 109px;
`;

const Period = styled.div`
	position: relative;
	width: 344.5px;
	height: 109px;
	line-height: 113px;
	text-align: center;
	font-size: 52.5px;
	font-weight: ${({ $active }) => ($active ? 700 : 400)};
	color: ${({ $active }) => ($active ? BLUE : GREY)};

	&:nth-child(6) {
		padding-right: 6px;
		margin-right: 64px;
	}

	&::after {
		content: "";
		display: ${({ $active }) => ($active ? "block" : "none")};
		position: absolute;
		left: 147px;
		bottom: 6px;
		width: 50px;
		height: 9px;
		border-radius: 4px;
		background: #326be4;
	}
`;

const SmallCorner = styled.i`
	position: absolute;
	right: 81px;
	bottom: 31px;
	border: 7px solid ${GREY};
	border-top-color: transparent;
	border-left-color: transparent;
`;

const ChartSvg = styled.svg`
	width: 2224px;
`;

const AxisText = styled.text`
	font-size: 35px;
	letter-spacing: -0.8px;
	fill: ${({ $color }) => $color || GREY};
`;

const Dates = styled.div`
	display: flex;
	height: 41px;
	padding-left: 10px;
	font-size: 35.5px;
	line-height: 43px;

	span {
		width: 439.7px;
		text-align: center;
	}
`;

const VolumeHead = styled.div`
	display: flex;
	align-items: center;
	gap: 15px;
	height: 61px;
	padding: 1px 0 0 10px;
	font-size: 34.5px;
	letter-spacing: -0.7px;
	line-height: 52px;
`;

const VolumeTag = styled.span`
	width: 128px;
	height: 50px;
	border-radius: 6px;
	background: #f7f7f7;
	text-align: center;
	font-size: 34px;
	letter-spacing: 0;
`;

const Chips = styled.div`
	display: flex;
	gap: 13px;
	height: 79px;
	padding: 8px 0 0 13px;
	overflow: hidden;
`;

const Chip = styled.div`
	display: flex;
	flex-shrink: 0;
	align-items: center;
	gap: ${({ $pro }) => ($pro ? "14px" : "15px")};
	height: 62px;
	padding: 2px ${({ $pro }) => ($pro ? "24px" : "22px")} 0;
	padding-left: ${({ $icon, $pro }) => ($icon ? "14px" : $pro ? "23px" : "22px")};
	border: 2px solid ${({ $pro }) => ($pro ? "#f3e4da" : "#eeeeee")};
	border-radius: 8px;
	background: ${({ $pro }) => ($pro ? "#f9eee7" : "#f8f8f8")};
	color: ${({ $pro }) => ($pro ? "#8f3c12" : GREY)};
	font-size: 41px;
	line-height: 56px;
`;

const News = styled.div`
	display: flex;
	align-items: center;
	height: 87px;
	margin: 0 7px 6px;
	padding: 0 43px 0 29px;
	border: 2px solid #e3e3e3;
	border-radius: 8px;
`;

const NewsText = styled.span`
	flex: 1;
	margin-left: 20px;
	padding-top: 1px;
	font-size: 41.1px;
	line-height: 60px;
`;

const BookTabs = styled.div`
	display: flex;
	gap: 61px;
	height: 122px;
	padding: 0 38px;
`;

const BookTab = styled.div`
	position: relative;
	height: 105px;
	line-height: 108px;
	font-size: 46px;
	font-weight: ${({ $active }) => ($active ? 700 : 400)};
	color: ${({ $active }) => ($active ? BLUE : GREY)};

	&::after {
		content: "";
		display: ${({ $active }) => ($active ? "block" : "none")};
		position: absolute;
		left: 73px;
		bottom: 1px;
		width: 38px;
		height: 5px;
		border-radius: 3px;
		background: #326be4;
	}
`;

const Book = styled.div`
	display: flex;
	height: 192px;
	overflow: hidden;
`;

const Side = styled.div`
	width: 1111px;
	padding: 0 39px 0 39px;
`;

const Divider = styled.div`
	width: 2px;
	margin-top: 22px;
	background: #e9e9e9;
`;

const OrderRow = styled.div`
	display: flex;
	align-items: center;
	height: 69px;
	line-height: 36px;

	span {
		padding-top: 3px;
	}
`;

const OrderName = styled.span`
	width: 97px;
	font-size: 40px;
`;

const OrderPrice = styled.span`
	width: 316px;
	font-size: 41px;
	letter-spacing: -0.5px;
	color: ${TEXT_RED};
`;

const DepthBar = styled.div`
	height: 19px;
	background: ${RED};
`;

const OrderAmount = styled.span`
	margin-left: auto;
	font-size: 41px;
	letter-spacing: -0.6px;
	color: ${DARK};
`;

const BottomBar = styled.div`
	position: relative;
	display: flex;
	height: 152px;
	padding: 19px 0 0 26px;
	border-top: 2px solid #f1f1f1;
	background: #fefefe;
`;

const TradeButton = styled.div`
	width: 535px;
	height: 112px;
	margin-right: 25px;
	border-radius: 6px;
	background: ${({ $color }) => $color};
	color: #fff;
	font-size: 52px;
	font-weight: 500;
	line-height: 115px;
	text-align: center;

	& + & {
		margin-right: 0;
	}
`;

const Tool = styled.div`
	display: flex;
	flex-direction: column;
	align-items: center;
	justify-content: space-between;
	width: 357px;
	height: 125px;
	margin-top: -4px;
	font-size: 37px;
	line-height: 50px;
`;

const RedDot = styled.i`
	position: absolute;
	right: 34px;
	top: 3px;
	width: 32px;
	height: 32px;
	border-radius: 50%;
	background: #e94f3f;
	box-shadow: 2px 5px 6px rgba(0, 0, 0, 0.15);
`;
